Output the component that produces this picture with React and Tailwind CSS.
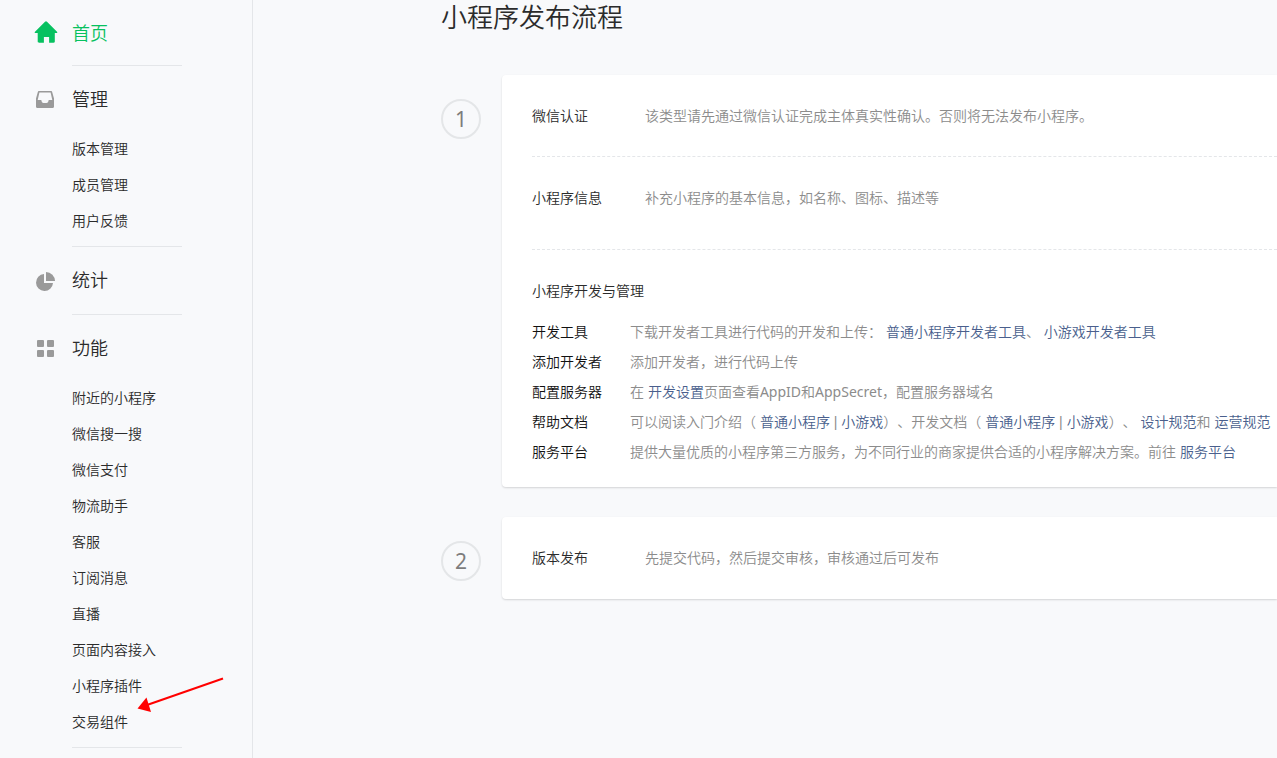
import React from "react";

const HomeIcon = () => (
  <svg width="24" height="26" viewBox="0 0 24 26" fill="#07c160" aria-hidden="true">
    <path d="M12 .2c.4 0 .7.2 1 .5l10 10c.6.6.4 1.300-.5 1.300H20.800v8.500c0 .8-.5 1.200-1.200 1.200h-4.500v-5.700h-5.200v5.700h-5c-.7 0-1.200-.4-1.200-1.200V12H1.500c-.9 0-1.100-.7-.5-1.300l10-10c.3-.3.6-.5 1-.5z" />
  </svg>
);

const InboxIcon = () => (
  <svg width="24" height="24" viewBox="0 0 24 24" aria-hidden="true">
    <path
      fill="#9a9a9a"
      fillRule="evenodd"
      d="M4.800 3h12.400c.5 0 .8.2.9.7L20 10.500v8c0 .9-.5 1.500-1.400 1.500H3.400C2.500 20 2 19.400 2 18.500v-8l1.900-6.800c.1-.5.4-.7.9-.7zM5.400 4.500 3.700 12h3.600c.3 1.900 1 3 2.200 3h3c1.200 0 1.900-1.100 2.200-3h3.600L16.600 4.500z"
    />
  </svg>
);

const PieIcon = () => (
  <svg width="24" height="24" viewBox="0 0 24 24" fill="#9a9a9a" aria-hidden="true">
    <path d="M10 5v9h9a8.500 8.500 0 1 1-9-9z" />
    <path d="M12 3a9 9 0 0 1 9 9h-9z" />
  </svg>
);

const GridIcon = () => (
  <svg width="24" height="24" viewBox="0 0 24 24" fill="#9a9a9a" aria-hidden="true">
    <rect x="3" y="3" width="7" height="7" rx="1" />
    <rect x="13" y="3" width="7" height="7" rx="1" />
    <rect x="3" y="13" width="7" height="7" rx="1" />
    <rect x="13" y="13" width="7" height="7" rx="1" />
  </svg>
);

const sections = [
  { title: "首页", icon: HomeIcon, active: true, items: [] },
  { title: "管理", icon: InboxIcon, items: ["版本管理", "成员管理", "用户反馈"] },
  { title: "统计", icon: PieIcon, items: [], spaced: true },
  {
    title: "功能",
    icon: GridIcon,
    items: [
      "附近的小程序",
      "微信搜一搜",
      "微信支付",
      "物流助手",
      "客服",
      "订阅消息",
      "直播",
      "页面内容接入",
      "小程序插件",
      "交易组件",
    ],
  },
];

function NavSection({ title, icon: Icon, active, items, spaced }) {
  return (
    <section>
      <a
        href="#"
        className={`flex h-[65px] items-center gap-[14px] pt-0.5 pl-[34px] text-lg ${
          active ? "text-[#07c160]" : "text-[#2b2b2b]"
        }`}
      >
        <Icon />
        {title}
      </a>
      {items.length > 0 && (
        <ul className="pb-[7px] pl-[72px]">
          {items.map((item) => (
            <li key={item} className="relative">
              <a href="#" className="block h-9 leading-9 text-[#2b2b2b]">
                {item}
              </a>
              {item === "交易组件" && <Arrow />}
            </li>
          ))}
        </ul>
      )}
      <div className={`mr-[70px] ml-[72px] border-b border-[#e4e6e9] ${spaced ? "pt-0.5" : ""}`} />
    </section>
  );
}

function Arrow() {
  return (
    <svg
      className="absolute -top-7 left-16"
      width="90"
      height="40"
      viewBox="0 0 90 40"
      aria-hidden="true"
    >
      <path d="M87 2.500 11 29" stroke="#f00" strokeWidth="2" />
      <path d="M1.500 32.500 10.500 21.500 15 36z" fill="#f00" />
    </svg>
  );
}

const Link = ({ children }) => (
  <a href="#" className="text-[#4a5f8d]">
    {children}
  </a>
);

function Step({ number, children }) {
  return (
    <div className="flex gap-[21px]">
      <div className="mt-6 flex size-10 shrink-0 items-center justify-center rounded-full border-2 border-[#e4e6e8] font-['Noto_Sans',sans-serif] text-[21px] font-normal text-[#7d7d7d]">
        {number}
      </div>
      <div className="min-w-0 flex-1 rounded-l bg-white pl-[30px] shadow-[0_1px_2px_rgba(0,0,0,0.15)]">
        {children}
      </div>
    </div>
  );
}

function InfoRow({ label, text, className }) {
  return (
    <div className={`flex pt-[30px] leading-[22px] ${className}`}>
      <h3 className="w-[113px] shrink-0 text-[#2b2b2b]">{label}</h3>
      <p className="whitespace-nowrap text-[#8c8c8c]">{text}</p>
    </div>
  );
}

function DetailRow({ label, children }) {
  return (
    <div className="flex leading-[30px]">
      <dt className="w-[98px] shrink-0 text-[#111]">{label}</dt>
      <dd className="whitespace-nowrap text-[#8c8c8c]">{children}</dd>
    </div>
  );
}

export default function App() {
  return (
    <div className="flex min-h-screen overflow-hidden bg-[#f8f9fb] font-['Liberation_Sans','Noto_Sans_CJK_SC',sans-serif] text-sm font-[350] [text-spacing-trim:space-all]">
      <nav className="w-[253px] shrink-0 border-r border-[#e4e6e9]">
        {sections.map((s) => (
          <NavSection key={s.title} {...s} />
        ))}
      </nav>
      <main className="min-w-0 flex-1 pl-[188px]">
        <h1 className="mb-[38px] text-[26px] leading-[37px] text-[#2b2b2b]">小程序发布流程</h1>
        <div className="flex flex-col gap-[30px]">
          <Step number="1">
            <InfoRow
              label="微信认证"
              text="该类型请先通过微信认证完成主体真实性确认。否则将无法发布小程序。"
              className="border-b border-dashed border-[#e4e6e9] pb-[29px]"
            />
            <InfoRow
              label="小程序信息"
              text="补充小程序的基本信息，如名称、图标、描述等"
              className="border-b border-dashed border-[#e4e6e9] pb-10"
            />
            <div className="pt-[30px] pb-5">
              <h3 className="mb-[15px] leading-[22px] text-[#2b2b2b]">小程序开发与管理</h3>
              <dl>
                <DetailRow label="开发工具">
                  下载开发者工具进行代码的开发和上传： <Link>普通小程序开发者工具</Link>、{" "}
                  <Link>小游戏开发者工具</Link>
                </DetailRow>
                <DetailRow label="添加开发者">添加开发者，进行代码上传</DetailRow>
                <DetailRow label="配置服务器">
                  在 <Link>开发设置</Link>页面查看
                  <span className="font-['Noto_Sans','Noto_Sans_CJK_SC',sans-serif]">
                    <span className="font-normal">AppID</span>和
                    <span className="font-normal">AppSecret</span>
                  </span>
                  ，配置服务器域名
                </DetailRow>
                <DetailRow label="帮助文档">
                  可以阅读入门介绍（ <Link>普通小程序</Link> | <Link>小游戏</Link>）、开发文档（{" "}
                  <Link>普通小程序</Link> | <Link>小游戏</Link>）、 <Link>设计规范</Link>和{" "}
                  <Link>运营规范</Link>
                </DetailRow>
                <DetailRow label="服务平台">
                  提供大量优质的小程序第三方服务，为不同行业的商家提供合适的小程序解决方案。前往{" "}
                  <Link>服务平台</Link>
                </DetailRow>
              </dl>
            </div>
          </Step>
          <Step number="2">
            <InfoRow
              label="版本发布"
              text="先提交代码，然后提交审核，审核通过后可发布"
              className="pb-[30px]"
            />
          </Step>
        </div>
      </main>
    </div>
  );
}
